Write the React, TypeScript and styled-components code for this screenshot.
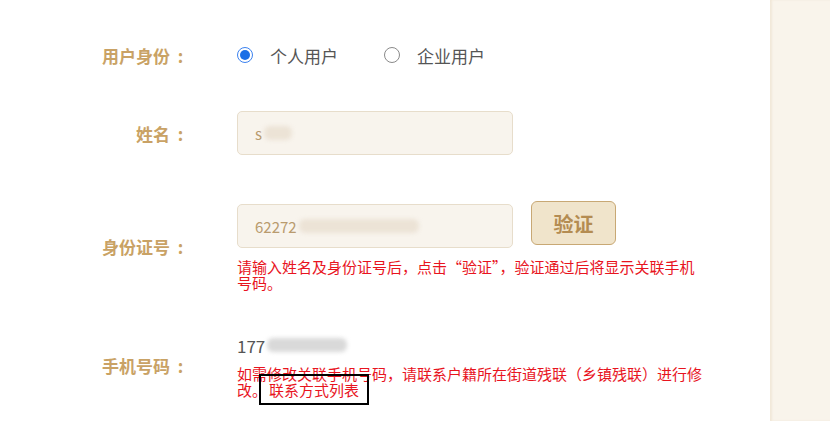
import React from 'react';
import styled, { createGlobalStyle } from 'styled-components';

const GlobalStyle = createGlobalStyle`
  html, body {
    margin: 0;
    padding: 0;
    background: #fff;
    font-family: "Noto Sans CJK SC", "Noto Sans", sans-serif;
  }
`;

const Page = styled.div`
  display: flex;
  width: 830px;
  height: 421px;
  overflow: hidden;
`;

const Main = styled.div`
  flex: 1;
  padding-left: 47px;
  padding-top: 40px;
`;

const Side = styled.div`
  width: 60px;
  background: #f9f4eb;
  box-shadow: inset 2px 0 2px rgba(230, 215, 190, 0.4);
`;

const Row = styled.div<{ top: number; h?: number }>`
  display: flex;
  align-items: center;
  margin-top: ${p => p.top}px;
  ${p => (p.h ? `height: ${p.h}px;` : '')}
`;

const Label = styled.div`
  width: 140px;
  margin-right: 50px;
  text-align: right;
  font-size: 17px;
  font-weight: 700;
  color: #c9a265;
  white-space: nowrap;
`;

const Colon = styled.span`
  display: inline-block;
  width: 17px;
  padding-left: 4px;
  box-sizing: border-box;
  text-align: center;
`;

const Content = styled.div`
  display: flex;
  flex-direction: column;
`;

const RadioGroup = styled.div`
  display: flex;
  align-items: center;
  gap: 46px;
`;

const RadioOption = styled.label`
  display: flex;
  align-items: center;
  gap: 17px;
  font-size: 17px;
  color: #555;
`;

const RadioDot = styled.span<{ checked?: boolean }>`
  box-sizing: border-box;
  width: 16px;
  height: 16px;
  border-radius: 50%;
  border: 1px solid ${p => (p.checked ? '#3b82f0' : '#8a8a8a')};
  display: flex;
  align-items: center;
  justify-content: center;
  &::after {
    content: '';
    display: ${p => (p.checked ? 'block' : 'none')};
    width: 10px;
    height: 10px;
    border-radius: 50%;
    background: #1a6fe6;
  }
`;

const Input = styled.div<{ shift?: number }>`
  box-sizing: border-box;
  width: 276px;
  height: 44px;
  margin-top: ${p => p.shift || 0}px;
  background: #f8f4ed;
  border: 1px solid #e7ddcb;
  border-radius: 5px;
  padding-left: 17px;
  display: flex;
  align-items: center;
  font-size: 15px;
  color: #b99b6e;
`;

const Blur = styled.span<{ w: number; dark?: boolean }>`
  display: inline-block;
  width: ${p => p.w}px;
  height: 14px;
  margin-left: 2px;
  border-radius: 6px;
  background: ${p => (p.dark ? '#d9d9d9' : '#ece3d6')};
  filter: blur(2px);
`;

const InputRow = styled.div`
  display: flex;
  align-items: flex-start;
`;

const VerifyButton = styled.button`
  box-sizing: border-box;
  width: 85px;
  height: 44px;
  margin-left: 18px;
  background: #f0e4cb;
  border: 1.5px solid #c8a874;
  border-radius: 6px;
  font-family: inherit;
  font-size: 20px;
  font-weight: 700;
  color: #b48c52;
  padding: 0;
`;

const Hint = styled.div<{ top: number }>`
  width: 470px;
  margin-top: ${p => p.top}px;
  font-size: 15px;
  line-height: 16px;
  color: #e8141e;
`;

const LinkBox = styled.span`
  padding: 3px 8px;
  margin-left: -8px;
  border: 2px solid #000;
  color: #e8141e;
`;

const Phone = styled.div`
  display: flex;
  align-items: center;
  height: 24px;
  font-size: 17px;
  color: #555;
`;

export default function App() {
  return (
    <>
      <GlobalStyle />
      <Page>
        <Main>
          <Row top={0} h={30}>
            <Label>用户身份<Colon>:</Colon></Label>
            <RadioGroup>
              <RadioOption>
                <RadioDot checked />
                个人用户
              </RadioOption>
              <RadioOption>
                <RadioDot />
                企业用户
              </RadioOption>
            </RadioGroup>
          </Row>

          <Row top={41}>
            <Label>姓名<Colon>:</Colon></Label>
            <Input>
              s<Blur w={28} />
            </Input>
          </Row>

          <Row top={46}>
            <Label>身份证号<Colon>:</Colon></Label>
            <Content>
              <InputRow>
                <Input shift={3}>
                  62272<Blur w={120} />
                </Input>
                <VerifyButton>验证</VerifyButton>
              </InputRow>
              <Hint top={11}>
                请输入姓名及身份证号后，点击“验证”，验证通过后将显示关联手机号码。
              </Hint>
            </Content>
          </Row>

          <Row top={42}>
            <Label>手机号码<Colon>:</Colon></Label>
            <Content>
              <Phone>
                177<Blur w={80} dark />
              </Phone>
              <Hint top={9}>
                如需修改关联手机号码，请联系户籍所在街道残联（乡镇残联）进行修改。
                <LinkBox>联系方式列表</LinkBox>
              </Hint>
            </Content>
          </Row>
        </Main>
        <Side />
      </Page>
    </>
  );
}
